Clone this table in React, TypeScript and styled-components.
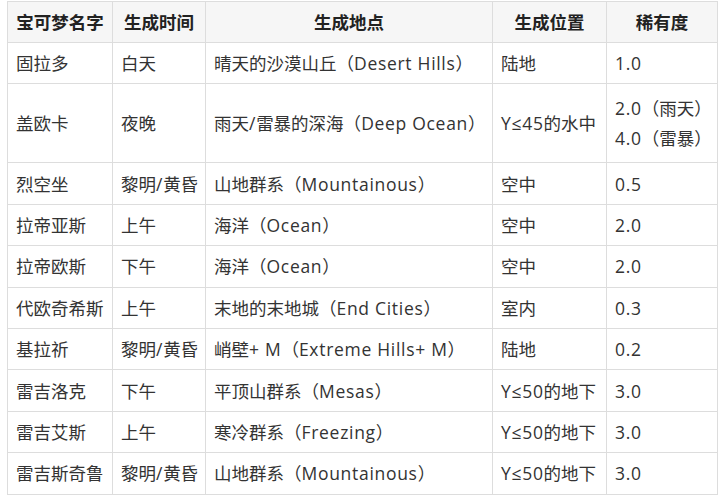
import React from "react";
import styled, { createGlobalStyle } from "styled-components";

const GlobalStyle = createGlobalStyle`
  * { box-sizing: border-box; }
  html, body { margin: 0; padding: 0; background: #ffffff; }
  body {
    font-family: "Open Sans", "DejaVu Sans", "Noto Sans CJK SC", sans-serif;
    color: #333333;
  }
`;

const Page = styled.div`
  padding: 1px 0 0 7px;
`;

const Table = styled.table`
  border-collapse: collapse;
  table-layout: fixed;
  width: 710px;
  font-size: 17.5px;
  line-height: 28px;
`;

const Col = styled.col<{ $w: number }>`
  width: ${(p) => p.$w}px;
`;

const HeadCell = styled.th`
  background: #f6f6f6;
  border: 1px solid #dddddd;
  font-weight: bold;
  color: #222222;
  text-align: center;
  padding: 0 8px;
  height: 41px;
`;

const Row = styled.tr<{ $h: number }>`
  height: ${(p) => p.$h}px;
`;

const Cell = styled.td`
  border: 1px solid #dddddd;
  padding: 0 8px;
  vertical-align: middle;
  white-space: nowrap;
  color: #333333;
`;

const Line = styled.div`
  line-height: 30px;
`;

const Latin = styled.span`
  letter-spacing: 0.7px;
`;

function Text({ value }: { value: string }) {
  const parts = value.split(/([\u0000-\u00ff\u2264]+)/).filter((s) => s.length > 0);
  return (
    <>
      {parts.map((p, i) =>
        /^[\u0000-\u00ff\u2264]+$/.test(p) ? <Latin key={i}>{p}</Latin> : <React.Fragment key={i}>{p}</React.Fragment>
      )}
    </>
  );
}

type Item = { name: string; time: string; place: string; pos: string; rarity: string[] };

const rows: Item[] = [
  { name: "固拉多", time: "白天", place: "晴天的沙漠山丘（Desert Hills）", pos: "陆地", rarity: ["1.0"] },
  { name: "盖欧卡", time: "夜晚", place: "雨天/雷暴的深海（Deep Ocean）", pos: "Y≤45的水中", rarity: ["2.0（雨天）", "4.0（雷暴）"] },
  { name: "烈空坐", time: "黎明/黄昏", place: "山地群系（Mountainous）", pos: "空中", rarity: ["0.5"] },
  { name: "拉帝亚斯", time: "上午", place: "海洋（Ocean）", pos: "空中", rarity: ["2.0"] },
  { name: "拉帝欧斯", time: "下午", place: "海洋（Ocean）", pos: "空中", rarity: ["2.0"] },
  { name: "代欧奇希斯", time: "上午", place: "末地的末地城（End Cities）", pos: "室内", rarity: ["0.3"] },
  { name: "基拉祈", time: "黎明/黄昏", place: "峭壁+ M（Extreme Hills+ M）", pos: "陆地", rarity: ["0.2"] },
  { name: "雷吉洛克", time: "下午", place: "平顶山群系（Mesas）", pos: "Y≤50的地下", rarity: ["3.0"] },
  { name: "雷吉艾斯", time: "上午", place: "寒冷群系（Freezing）", pos: "Y≤50的地下", rarity: ["3.0"] },
  { name: "雷吉斯奇鲁", time: "黎明/黄昏", place: "山地群系（Mountainous）", pos: "Y≤50的地下", rarity: ["3.0"] },
];

export default function App() {
  return (
    <>
      <GlobalStyle />
      <Page>
        <Table>
          <colgroup>
            <Col $w={105} />
            <Col $w={93} />
            <Col $w={287} />
            <Col $w={114} />
            <Col $w={111} />
          </colgroup>
          <thead>
            <tr>
              <HeadCell>宝可梦名字</HeadCell>
              <HeadCell>生成时间</HeadCell>
              <HeadCell>生成地点</HeadCell>
              <HeadCell>生成位置</HeadCell>
              <HeadCell>稀有度</HeadCell>
            </tr>
          </thead>
          <tbody>
            {rows.map((r) => (
              <Row key={r.name} $h={r.rarity.length > 1 ? 79 : 41.4}>
                <Cell>{r.name}</Cell>
                <Cell><Text value={r.time} /></Cell>
                <Cell><Text value={r.place} /></Cell>
                <Cell><Text value={r.pos} /></Cell>
                <Cell>
                  {r.rarity.map((x) => (
                    <Line key={x}><Text value={x} /></Line>
                  ))}
                </Cell>
              </Row>
            ))}
          </tbody>
        </Table>
      </Page>
    </>
  );
}
